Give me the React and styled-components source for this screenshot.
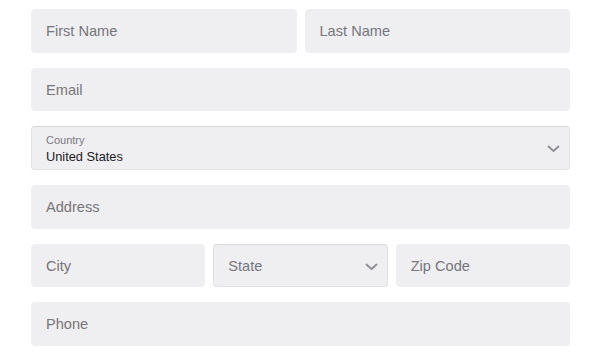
import React from "react";
import styled, { createGlobalStyle } from "styled-components";

const GlobalStyle = createGlobalStyle`
  html, body {
    margin: 0;
    padding: 0;
    background: #ffffff;
  }
  body {
    font-family: "Liberation Sans", Arial, sans-serif;
  }
`;

const Form = styled.form`
  display: flex;
  flex-direction: column;
  gap: 15px;
  padding: 9px 30px 0 31px;
  width: 539px;
`;

const Row = styled.div`
  display: grid;
  grid-template-columns: ${({ cols }) => `repeat(${cols || 1}, 1fr)`};
  gap: 8px;
`;

const Field = styled.div`
  position: relative;
  height: 43.7px;
  box-sizing: border-box;
  background: #efeef0;
  border-radius: 4px;
  border: 1px solid ${({ select }) => (select ? "#e2e1e4" : "#efeef0")};
  border-top-color: ${({ select }) => (select ? "#d9d8db" : "#efeef0")};
  display: flex;
  align-items: center;
  padding: 0 14px;
`;

const Placeholder = styled.span`
  font-size: 14.6px;
  color: #76767b;
  flex: 1;
`;

const Stack = styled.div`
  display: flex;
  flex-direction: column;
  flex: 1;
  gap: 3px;
  margin-top: 2px;
`;

const Label = styled.span`
  font-size: 11px;
  color: #7a7a7f;
`;

const Value = styled.span`
  font-size: 12.8px;
  color: #1c1c1e;
`;

const Chevron = () => (
  <svg width="13" height="8" viewBox="0 0 13 8" fill="none">
    <path
      d="M1.5 1.5 L6.5 6 L11.5 1.5"
      stroke="#8e8e93"
      strokeWidth="1.8"
      strokeLinecap="round"
      strokeLinejoin="round"
    />
  </svg>
);

const ChevronWrap = styled.span`
  display: flex;
  align-items: center;
  margin-right: -5px;
  margin-top: 2px;
`;

const App = () => {
  return (
    <>
      <GlobalStyle />
      <Form>
        <Row cols={2}>
          <Field>
            <Placeholder>First Name</Placeholder>
          </Field>
          <Field>
            <Placeholder>Last Name</Placeholder>
          </Field>
        </Row>
        <Row>
          <Field>
            <Placeholder>Email</Placeholder>
          </Field>
        </Row>
        <Row>
          <Field select>
            <Stack>
              <Label>Country</Label>
              <Value>United States</Value>
            </Stack>
            <ChevronWrap>
              <Chevron />
            </ChevronWrap>
          </Field>
        </Row>
        <Row>
          <Field>
            <Placeholder>Address</Placeholder>
          </Field>
        </Row>
        <Row cols={3}>
          <Field>
            <Placeholder>City</Placeholder>
          </Field>
          <Field select>
            <Placeholder>State</Placeholder>
            <ChevronWrap>
              <Chevron />
            </ChevronWrap>
          </Field>
          <Field>
            <Placeholder>Zip Code</Placeholder>
          </Field>
        </Row>
        <Row>
          <Field>
            <Placeholder>Phone</Placeholder>
          </Field>
        </Row>
      </Form>
    </>
  );
};

export default App;
